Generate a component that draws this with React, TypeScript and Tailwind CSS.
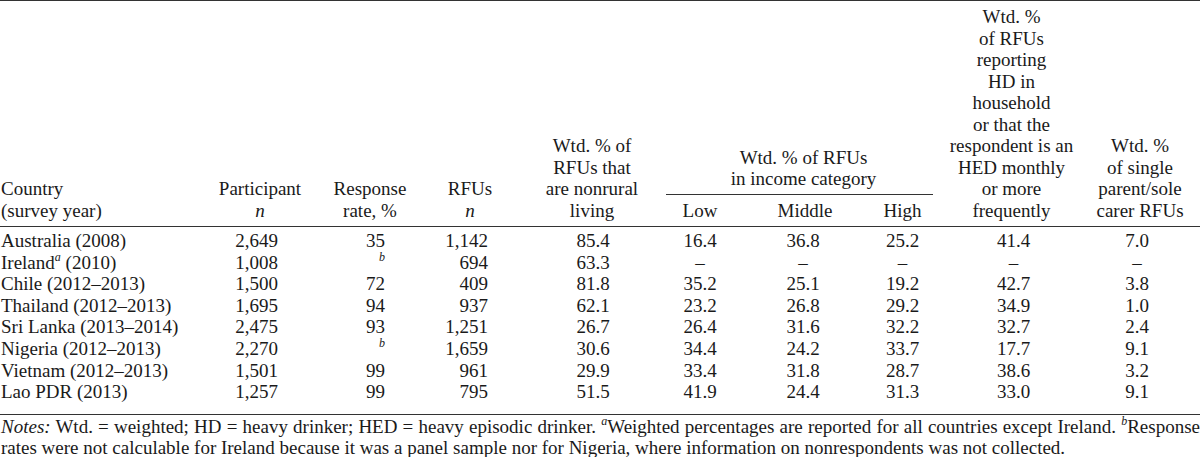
import React from "react";

type Row = {
  country: React.ReactNode;
  p: string;
  r: React.ReactNode;
  rfu: string;
  nr: string;
  low: string;
  mid: string;
  high: string;
  hd: string;
  sp: string;
};

const Sup = ({ c }: { c: string }) => (
  <sup className="italic text-[12px] relative -top-[1px] align-super leading-none">{c}</sup>
);

const D = "–";

const rows: Row[] = [
  { country: "Australia (2008)", p: "2,649", r: "35", rfu: "1,142", nr: "85.4", low: "16.4", mid: "36.8", high: "25.2", hd: "41.4", sp: "7.0" },
  { country: <>Ireland<Sup c="a" /> (2010)</>, p: "1,008", r: <Sup c="b" />, rfu: "694", nr: "63.3", low: D, mid: D, high: D, hd: D, sp: D },
  { country: "Chile (2012–2013)", p: "1,500", r: "72", rfu: "409", nr: "81.8", low: "35.2", mid: "25.1", high: "19.2", hd: "42.7", sp: "3.8" },
  { country: "Thailand (2012–2013)", p: "1,695", r: "94", rfu: "937", nr: "62.1", low: "23.2", mid: "26.8", high: "29.2", hd: "34.9", sp: "1.0" },
  { country: "Sri Lanka (2013–2014)", p: "2,475", r: "93", rfu: "1,251", nr: "26.7", low: "26.4", mid: "31.6", high: "32.2", hd: "32.7", sp: "2.4" },
  { country: "Nigeria (2012–2013)", p: "2,270", r: <Sup c="b" />, rfu: "1,659", nr: "30.6", low: "34.4", mid: "24.2", high: "33.7", hd: "17.7", sp: "9.1" },
  { country: "Vietnam (2012–2013)", p: "1,501", r: "99", rfu: "961", nr: "29.9", low: "33.4", mid: "31.8", high: "28.7", hd: "38.6", sp: "3.2" },
  { country: "Lao PDR (2013)", p: "1,257", r: "99", rfu: "795", nr: "51.5", low: "41.9", mid: "24.4", high: "31.3", hd: "33.0", sp: "9.1" },
];

export default function App() {
  const last = rows.length - 1;
  return (
    <div
      className="w-[1200px] h-[457px] bg-white text-[#1a1a1a] overflow-hidden"
      style={{ fontFamily: '"Liberation Serif", "Times New Roman", serif' }}
    >
      <table className="table-fixed w-[1200px] border-collapse text-[19px] leading-[21.5px]">
        <colgroup>
          <col className="w-[210px]" />
          <col className="w-[100px]" />
          <col className="w-[120px]" />
          <col className="w-[80px]" />
          <col className="w-[156px]" />
          <col className="w-[74px]" />
          <col className="w-[130px]" />
          <col className="w-[63px]" />
          <col className="w-[157px]" />
          <col className="w-[110px]" />
        </colgroup>
        <thead>
          <tr className="border-t border-[#333]">
            <th className="font-normal text-left align-bottom pl-[1px] pb-[5px]">
              Country
              <br />
              (survey year)
            </th>
            <th className="font-normal text-center align-bottom pb-[5px]">
              Participant
              <br />
              <i>n</i>
            </th>
            <th className="font-normal text-center align-bottom pb-[5px]">
              Response
              <br />
              rate, %
            </th>
            <th className="font-normal text-center align-bottom pb-[5px]">
              RFUs
              <br />
              <i>n</i>
            </th>
            <th className="font-normal text-center align-bottom pb-[5px] pl-[8px]">
              Wtd. % of
              <br />
              RFUs that
              <br />
              are nonrural
              <br />
              living
            </th>
            <th colSpan={3} className="font-normal text-center align-bottom p-0">
              <div className="border-b border-[#333] pb-[4px] pl-[8px]">
                Wtd. % of RFUs
                <br />
                in income category
              </div>
              <div className="grid grid-cols-[74px_130px_63px] pt-[5px] pb-[5px]">
                <div className="pr-[6px]">Low</div>
                <div>Middle</div>
                <div className="pl-[2px]">High</div>
              </div>
            </th>
            <th className="font-normal text-center align-bottom pt-[5px] pb-[5px]">
              Wtd. %
              <br />
              of RFUs
              <br />
              reporting
              <br />
              HD in
              <br />
              household
              <br />
              or that the
              <br />
              respondent is an
              <br />
              HED monthly
              <br />
              or more
              <br />
              frequently
            </th>
            <th className="font-normal text-center align-bottom pb-[5px] pr-[10px]">
              Wtd. %
              <br />
              of single
              <br />
              parent/sole
              <br />
              carer RFUs
            </th>
          </tr>
        </thead>
        <tbody className="border-t border-[#333]">
          {rows.map((r, i) => {
            const pad = `${i === 0 ? "pt-[3px]" : ""} ${i === last ? "pb-[11px]" : ""}`;
            return (
              <tr key={i}>
                <td className={`pl-[1px] whitespace-nowrap ${pad}`}>{r.country}</td>
                <td className={`text-right pr-[32px] ${pad}`}>{r.p}</td>
                <td className={`text-right pr-[45px] ${pad}`}>{r.r}</td>
                <td className={`text-right pr-[22px] ${pad}`}>{r.rfu}</td>
                <td className={`text-center pl-[10px] ${pad}`}>{r.nr}</td>
                <td className={`text-center pr-[6px] ${pad}`}>{r.low}</td>
                <td className={`text-center pr-[4px] ${pad}`}>{r.mid}</td>
                <td className={`text-center pl-[2px] ${pad}`}>{r.high}</td>
                <td className={`text-center pl-[4px] ${pad}`}>{r.hd}</td>
                <td className={`text-center pr-[16px] ${pad}`}>{r.sp}</td>
              </tr>
            );
          })}
        </tbody>
      </table>
      <div className="border-t border-[#333] pt-[1px] text-[19px] leading-[21.5px] pl-[1px]">
        <div className="[text-align-last:justify] whitespace-nowrap">
          <i>Notes:</i> Wtd. = weighted; HD = heavy drinker; HED = heavy episodic drinker. <Sup c="a" />Weighted percentages are reported for all countries except Ireland. <Sup c="b" />Response
        </div>
        <div>
          rates were not calculable for Ireland because it was a panel sample nor for Nigeria, where information on nonrespondents was not collected.
        </div>
      </div>
    </div>
  );
}
